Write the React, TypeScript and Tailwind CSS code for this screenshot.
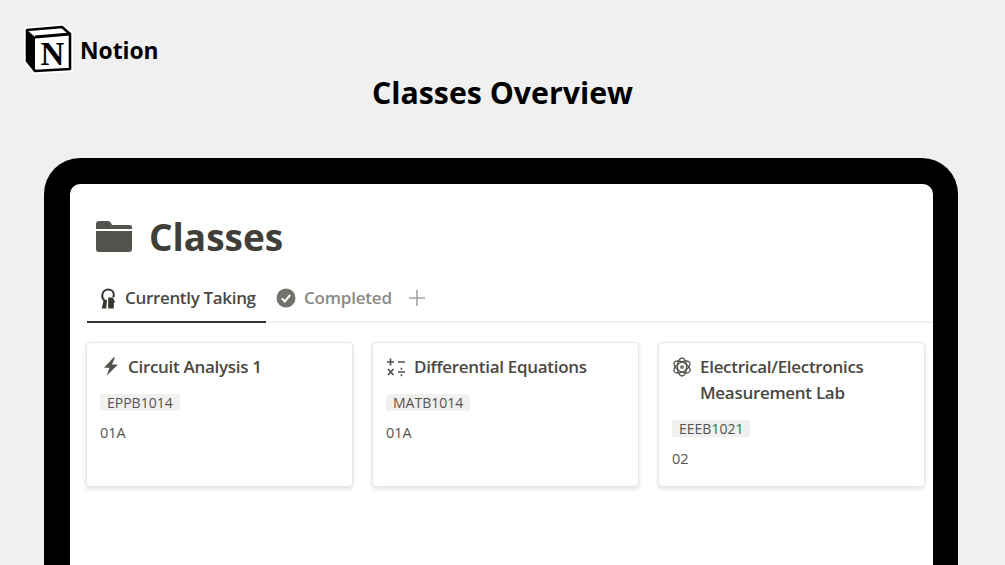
const sans = "font-['Open_Sans','Noto_Sans',sans-serif]";

function NotionLogo() {
  return (
    <svg width="50" height="50" viewBox="0 0 50 50" className="shrink-0">
      <path
        d="M2 5 L38 2 L47 9 V46 L11 48 L2 38 Z"
        fill="#fff"
        stroke="#fff"
        strokeWidth="4"
        strokeLinejoin="round"
      />
      <path
        d="M3 6 L38 3 L46 10 V45 L11 47 L3 37 Z"
        fill="#fff"
        stroke="#000"
        strokeWidth="2.6"
        strokeLinejoin="round"
      />
      <path d="M3 6 L11 13 V47 L3 37 Z" fill="#000" />
      <path d="M11 13 L46 10" stroke="#000" strokeWidth="2.8" fill="none" />
      <text
        x="28.5"
        y="40.5"
        textAnchor="middle"
        fontFamily="'Liberation Serif', serif"
        fontWeight="700"
        fontSize="33"
        fill="#000"
      >
        N
      </text>
    </svg>
  );
}

function FolderIcon() {
  return (
    <svg width="38" height="33" viewBox="0 0 38 33" fill="#55534e">
      <path d="M1 4 Q1 1 4 1 H13 Q15 1 16 3 L17 5 H35 Q37 5 37 7 V9 H1 Z" />
      <path d="M1 11 H37 V29 Q37 32 34 32 H4 Q1 32 1 29 Z" />
    </svg>
  );
}

function HeadKeyIcon() {
  return (
    <svg width="16" height="21" viewBox="0 0 16 21" fill="#37352f">
      <path
        d="M4.6 12.4 C3 11.4 2 9.2 2.3 6.9 C2.7 3.6 5.2 1.4 8.2 1.4 C11.4 1.4 13.8 3.8 13.8 6.8 C13.8 7.7 13.6 8.6 13.2 9.4"
        fill="none"
        stroke="#37352f"
        strokeWidth="2"
      />
      <path d="M3.6 12 H7 L6.2 20.5 H1.8 Z" />
      <path d="M8.2 9.6 H12.6 L15.2 14 L13.8 14.8 V20.5 H8.2 Z" />
    </svg>
  );
}

function CheckCircleIcon() {
  return (
    <svg width="20" height="20" viewBox="0 0 20 20">
      <circle cx="10" cy="10" r="9.5" fill="#73726d" />
      <path d="M5.8 10.4 L8.8 13.4 L14.2 7" fill="none" stroke="#fff" strokeWidth="2" />
    </svg>
  );
}

function BoltIcon() {
  return (
    <svg width="16" height="19" viewBox="0 0 16 19" fill="#55534e">
      <path d="M10.5 0.5 L1 10.8 H6.4 L3.8 18.5 L15 7.4 H9 L12 0.5 Z" />
    </svg>
  );
}

function MathIcon() {
  return (
    <svg width="20" height="20" viewBox="0 0 20 20" stroke="#55534e" strokeWidth="1.7" fill="#55534e">
      <path d="M1 5 H8 M4.5 1.5 V8.5 M12 5 H19" fill="none" />
      <path d="M2 12 L7.5 18 M7.5 12 L2 18 M12 15 H19" fill="none" />
      <circle cx="15.5" cy="11.8" r="0.7" strokeWidth="0.8" />
      <circle cx="15.5" cy="18.2" r="0.7" strokeWidth="0.8" />
    </svg>
  );
}

function AtomIcon() {
  return (
    <svg width="20" height="20" viewBox="0 0 20 20" fill="none" stroke="#55534e" strokeWidth="1.3">
      <ellipse cx="10" cy="10" rx="9" ry="4.6" transform="rotate(90 10 10)" />
      <ellipse cx="10" cy="10" rx="9" ry="4.6" transform="rotate(30 10 10)" />
      <ellipse cx="10" cy="10" rx="9" ry="4.6" transform="rotate(150 10 10)" />
      <circle cx="10" cy="10" r="1.2" />
    </svg>
  );
}

const classes = [
  {
    id: 1,
    icon: <BoltIcon />,
    iconClass: "pl-[3px]",
    title: ["Circuit Analysis 1"],
    code: "EPPB1014",
    section: "01A",
  },
  {
    id: 2,
    icon: <MathIcon />,
    iconClass: "",
    title: ["Differential Equations"],
    code: "MATB1014",
    section: "01A",
  },
  {
    id: 3,
    icon: <AtomIcon />,
    iconClass: "",
    title: ["Electrical/Electronics", "Measurement Lab"],
    code: "EEEB1021",
    section: "02",
  },
];

export default function App() {
  return (
    <div className={`${sans} w-[1005px] h-[565px] overflow-hidden bg-[#f0f0f0] text-black`}>
      {/* Logo row */}
      <div className="flex items-center h-[50px] mt-6 pl-6 gap-[6px]">
        <NotionLogo />
        <span className="text-[22.8px] leading-none font-bold pt-[4px]">Notion</span>
      </div>

      <h1 className="mt-[-1px] text-center text-[30.3px] leading-[40px] font-bold">
        Classes Overview
      </h1>

      {/* Device frame */}
      <div className="mt-[45px] ml-11 w-[914px] h-[500px] rounded-t-[36px] bg-black pt-[26px] px-[26px]">
        <div className="h-full w-[863px] rounded-t-[10px] bg-white overflow-hidden text-[#37352f]">
          <div className="flex items-center gap-[16px] pl-[25px] pt-[29px] h-[75px]">
            <FolderIcon />
            <span className="text-[37px] leading-none font-bold text-[#403e38]">Classes</span>
          </div>

          {/* Tabs */}
          <div className="mt-[13px] ml-[17px] flex h-[51px] border-b-2 border-[#efefee]">
            <div className="w-[179px] h-[51px] border-b-2 border-[#37352f] flex items-center pl-[13px] gap-[9px] pt-[3px]">
              <HeadKeyIcon />
              <span className="text-[17px] font-semibold text-[#4a4843] tracking-[-0.33px]">
                Currently Taking
              </span>
            </div>
            <div className="flex items-center pl-[10px] gap-[8px] h-[51px] text-[#787774]">
              <CheckCircleIcon />
              <span className="text-[17px] font-semibold tracking-[-0.2px] text-[#8a8985]">
                Completed
              </span>
              <svg width="18" height="18" viewBox="0 0 18 18" className="ml-[8px]" stroke="#a5a4a0" strokeWidth="1.6">
                <path d="M9 1 V17 M1 9 H17" />
              </svg>
            </div>
          </div>

          {/* Cards */}
          <div className="mt-[19px] ml-[16px] flex gap-[19px]">
            {classes.map((item) => (
              <div
                key={item.id}
                className="w-[267px] h-[145px] rounded-[4px] bg-white border border-[#e6e6e5] shadow-[0_2px_4px_rgba(15,15,15,0.12)] pt-[11px] pl-[13px]"
              >
                <div className="flex items-start">
                  <div className={`w-[28px] h-[25px] flex items-center shrink-0 ${item.iconClass}`}>{item.icon}</div>
                  <div className="text-[17px] leading-[25.5px] font-semibold text-[#4a4843] tracking-[-0.3px]">
                    {item.title.map((line) => (
                      <div key={line}>{line}</div>
                    ))}
                  </div>
                </div>
                <div className="mt-[14.5px] w-fit rounded-[3px] bg-[#f1f0ef] px-[7px] text-[14px] leading-[17px] text-[#55534e]">
                  {item.code}
                </div>
                <div className="mt-[12px] text-[14.5px] leading-[20px] text-[#55534e]">
                  {item.section}
                </div>
              </div>
            ))}
          </div>
        </div>
      </div>
    </div>
  );
}
